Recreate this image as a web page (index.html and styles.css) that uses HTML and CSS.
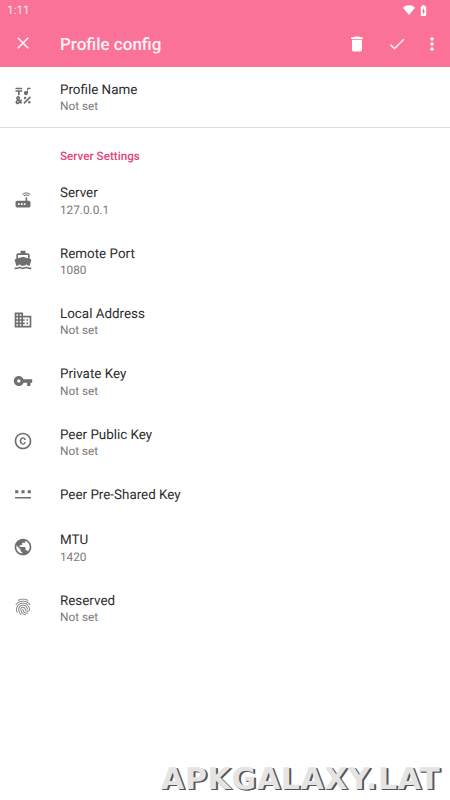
FILE: index.html
```html
<!DOCTYPE html>
<html lang="en">
<head>
<meta charset="utf-8">
<title>Profile config</title>
<link rel="stylesheet" href="styles.css">
</head>
<body>
<header class="header">
  <div class="status">
    <span class="clock">1:11</span>
    <svg class="wifi" viewBox="0 0 24 24"><path d="M12 22 0 7.500C3.500 4 7.500 2.500 12 2.500S20.500 4 24 7.500z"/></svg>
    <svg class="battery" viewBox="0 0 24 24"><path d="M15.670 4H14V2h-4v2H8.330C7.600 4 7 4.600 7 5.330v15.330C7 21.400 7.600 22 8.330 22h7.330c.740 0 1.340-.600 1.340-1.330V5.330C17 4.600 16.400 4 15.670 4zM11 20v-5.500H9L13 7v5.500h2L11 20z"/></svg>
  </div>
  <div class="toolbar">
    <svg class="icon close" viewBox="0 0 24 24"><path d="M19 6.410L17.590 5 12 10.590 6.410 5 5 6.410 10.590 12 5 17.590 6.410 19 12 13.410 17.590 19 19 17.590 13.410 12z"/></svg>
    <h1 class="heading">Profile config</h1>
    <svg class="icon delete" viewBox="0 0 24 24"><path d="M6 19c0 1.100.900 2 2 2h8c1.100 0 2-.900 2-2V7H6v12zM19 4h-3.500l-1-1h-5l-1 1H5v2h14V4z"/></svg>
    <svg class="icon done" viewBox="0 0 24 24"><path d="M9 16.200L4.800 12l-1.400 1.400L9 19 21 7l-1.400-1.400L9 16.200z"/></svg>
    <svg class="icon more" viewBox="0 0 24 24"><path d="M12 8c1.100 0 2-.900 2-2s-.900-2-2-2-2 .900-2 2 .900 2 2 2zm0 2c-1.100 0-2 .900-2 2s.900 2 2 2 2-.900 2-2-.900-2-2-2zm0 6c-1.100 0-2 .900-2 2s.900 2 2 2 2-.900 2-2-.900-2-2-2z"/></svg>
  </div>
</header>
<main>
  <section class="group">
    <div class="row">
      <svg class="icon" viewBox="0 0 24 24"><path d="M3 2h8v2H3zM6 11h2V7h3V5H3v2h3zM12.400 20.180l7.780-7.780 1.420 1.420-7.780 7.780zM15.500 11c1.380 0 2.500-1.120 2.500-2.500V4h3V2h-4v4.510c-.420-.320-.930-.510-1.500-.510-1.380 0-2.500 1.120-2.500 2.500s1.120 2.500 2.500 2.500zM9.740 15.960l-1.410 1.410-.710-.710.350-.350c.980-.980.980-2.560 0-3.540-.490-.490-1.130-.730-1.770-.730s-1.280.240-1.770.730c-.980.980-.980 2.560 0 3.540l.350.350-1.060 1.060c-.980.980-.980 2.560 0 3.540.490.490 1.130.740 1.770.740s1.280-.240 1.770-.730l1.060-1.060 1.410 1.410 1.410-1.410-1.410-1.410 1.410-1.410zM5.850 14.200c.120-.120.260-.150.350-.150s.230.030.350.150c.190.200.190.510 0 .710l-.350.350-.350-.360c-.190-.190-.190-.510 0-.700zm0 5.650c-.120.120-.260.150-.350.150s-.230-.030-.350-.150c-.190-.200-.190-.510 0-.710l1.060-1.060.710.710z"/><circle cx="14.500" cy="14.500" r="1.500"/><circle cx="19.500" cy="19.500" r="1.500"/></svg>
      <div class="text"><div class="title">Profile Name</div><div class="summary">Not set</div></div>
    </div>
  </section>
  <section>
    <h2 class="category">Server Settings</h2>
    <div class="row">
      <svg class="icon" viewBox="0 0 24 24"><path d="M20.200 5.900l.800-.800C19.600 3.700 17.800 3 16 3s-3.600.700-5 2.100l.800.800C13 4.800 14.500 4.200 16 4.200s3 .600 4.200 1.700zm-.900.800c-.900-.900-2.100-1.400-3.300-1.400s-2.400.500-3.300 1.400l.800.800c.700-.700 1.600-1 2.500-1s1.800.300 2.500 1l.800-.800zM19 13h-2V9h-2v4H5c-1.100 0-2 .900-2 2v4c0 1.100.900 2 2 2h14c1.100 0 2-.900 2-2v-4c0-1.100-.900-2-2-2zM8 18H6v-2h2v2zm3.500 0h-2v-2h2v2zm3.500 0h-2v-2h2v2z"/></svg>
      <div class="text"><div class="title">Server</div><div class="summary">127.0.0.1</div></div>
    </div>
    <div class="row">
      <svg class="icon" viewBox="0 0 24 24"><path d="M20 21c-1.390 0-2.780-.470-4-1.320-2.440 1.710-5.560 1.710-8 0C6.780 20.530 5.390 21 4 21H2v2h2c1.380 0 2.740-.350 4-.990 2.520 1.290 5.480 1.290 8 0 1.260.650 2.620.990 4 .990h2v-2h-2zM3.950 19H4c1.600 0 3.020-.880 4-2 .980 1.120 2.400 2 4 2s3.020-.880 4-2c.980 1.120 2.400 2 4 2h.050l1.890-6.680c.080-.260.060-.540-.060-.780s-.340-.420-.600-.500L20 10.620V6c0-1.100-.900-2-2-2h-3V1H9v3H6c-1.100 0-2 .900-2 2v4.620l-1.290.420c-.260.080-.480.260-.600.500s-.150.520-.060.780L3.950 19zM6 6h12v3.970L12 8 6 9.970V6z"/></svg>
      <div class="text"><div class="title">Remote Port</div><div class="summary">1080</div></div>
    </div>
    <div class="row">
      <svg class="icon" viewBox="0 0 24 24"><path d="M12 7V3H2v18h20V7H12zM6 19H4v-2h2v2zm0-4H4v-2h2v2zm0-4H4V9h2v2zm0-4H4V5h2v2zm4 12H8v-2h2v2zm0-4H8v-2h2v2zm0-4H8V9h2v2zm0-4H8V5h2v2zm10 12h-8v-2h2v-2h-2v-2h2v-2h-2V9h8v10zm-2-8h-2v2h2v-2zm0 4h-2v2h2v-2z"/></svg>
      <div class="text"><div class="title">Local Address</div><div class="summary">Not set</div></div>
    </div>
    <div class="row">
      <svg class="icon" viewBox="0 0 24 24"><path d="M12.650 10C11.830 7.670 9.610 6 7 6c-3.310 0-6 2.690-6 6s2.690 6 6 6c2.610 0 4.830-1.670 5.650-4H17v4h4v-4h2v-4H12.650zM7 14c-1.100 0-2-.900-2-2s.900-2 2-2 2 .900 2 2-.900 2-2 2z"/></svg>
      <div class="text"><div class="title">Private Key</div><div class="summary">Not set</div></div>
    </div>
    <div class="row">
      <svg class="icon" viewBox="0 0 24 24"><path d="M10.080 10.860c.050-.330.160-.620.300-.870s.340-.460.590-.620c.240-.150.540-.220.910-.230.230.010.440.050.630.130.200.090.380.210.520.360s.250.330.340.530.130.420.140.640h1.790c-.020-.470-.110-.900-.280-1.290s-.400-.730-.700-1.010-.660-.500-1.080-.660-.880-.230-1.390-.230c-.650 0-1.220.110-1.700.340s-.880.530-1.200.920-.560.840-.710 1.360S8 11.290 8 11.870v.270c0 .580.080 1.120.230 1.640s.390.970.710 1.350.720.690 1.200.910 1.050.340 1.700.340c.470 0 .910-.080 1.320-.230s.770-.360 1.080-.630.560-.580.740-.940.290-.740.300-1.150h-1.790c-.010.210-.060.400-.150.580s-.210.330-.360.460-.320.230-.520.300c-.190.070-.390.090-.600.100-.360-.010-.660-.080-.890-.230-.250-.160-.450-.370-.590-.620s-.250-.550-.300-.880-.080-.670-.080-1v-.270c0-.350.030-.680.080-1.010zM12 2C6.480 2 2 6.480 2 12s4.480 10 10 10 10-4.480 10-10S17.520 2 12 2zm0 18c-4.410 0-8-3.590-8-8s3.590-8 8-8 8 3.590 8 8-3.590 8-8 8z"/></svg>
      <div class="text"><div class="title">Peer Public Key</div><div class="summary">Not set</div></div>
    </div>
    <div class="row single">
      <svg class="icon" viewBox="0 0 24 24"><path d="M2.500 15.500h19v2h-19zM2.600 7.500h3.800v3.600H2.600zM10.100 7.500h3.800v3.600h-3.800zM17.600 7.500h3.800v3.600h-3.800z"/></svg>
      <div class="text"><div class="title">Peer Pre-Shared Key</div></div>
    </div>
    <div class="row">
      <svg class="icon" viewBox="0 0 24 24"><path d="M12 2C6.480 2 2 6.480 2 12s4.480 10 10 10 10-4.480 10-10S17.520 2 12 2zm-1 17.930c-3.950-.490-7-3.850-7-7.930 0-.620.080-1.210.210-1.790L9 15v1c0 1.100.900 2 2 2v1.930zm6.900-2.540c-.260-.810-1-1.390-1.900-1.390h-1v-3c0-.550-.450-1-1-1H8v-2h2c.550 0 1-.450 1-1V7h2c1.100 0 2-.900 2-2v-.410c2.930 1.190 5 4.060 5 7.410 0 2.080-.800 3.970-2.100 5.390z"/></svg>
      <div class="text"><div class="title">MTU</div><div class="summary">1420</div></div>
    </div>
    <div class="row">
      <svg class="icon" viewBox="0 0 24 24"><path d="M17.810 4.470c-.080 0-.160-.020-.230-.060C15.660 3.420 14 3 12.010 3c-1.980 0-3.860.470-5.570 1.410-.240.130-.540.040-.680-.200-.130-.240-.040-.550.200-.680C7.820 2.520 9.860 2 12.010 2c2.130 0 3.990.470 6.030 1.520.250.130.340.430.210.670-.090.180-.260.280-.440.280zM3.500 9.720c-.100 0-.200-.030-.290-.090-.230-.160-.280-.470-.120-.700.990-1.400 2.250-2.500 3.750-3.270C9.980 4.040 14 4.030 17.150 5.650c1.500.770 2.760 1.860 3.750 3.250.160.220.110.540-.120.700-.230.160-.540.110-.700-.120-.900-1.260-2.040-2.250-3.390-2.940-2.870-1.470-6.540-1.470-9.400.010-1.360.700-2.500 1.700-3.400 2.960-.080.140-.230.210-.390.210zm6.250 12.070c-.130 0-.260-.050-.350-.150-.870-.870-1.340-1.430-2.010-2.640-.690-1.230-1.050-2.730-1.050-4.340 0-2.970 2.540-5.390 5.660-5.390s5.660 2.420 5.660 5.390c0 .280-.220.500-.500.500s-.500-.220-.500-.500c0-2.420-2.090-4.390-4.660-4.390-2.570 0-4.660 1.970-4.660 4.390 0 1.440.320 2.770.930 3.850.640 1.150 1.080 1.640 1.850 2.420.190.200.190.510 0 .710-.110.100-.240.150-.370.150zm7.170-1.850c-1.190 0-2.240-.300-3.100-.890-1.490-1.010-2.380-2.650-2.380-4.390 0-.280.220-.500.500-.500s.500.220.500.500c0 1.410.720 2.740 1.940 3.560.710.480 1.540.710 2.540.710.240 0 .640-.030 1.040-.100.270-.050.530.130.580.410.050.270-.130.530-.410.580-.570.110-1.070.120-1.210.120zM14.910 22c-.040 0-.090-.010-.130-.020-1.590-.440-2.630-1.030-3.720-2.100-1.400-1.390-2.170-3.240-2.170-5.220 0-1.620 1.380-2.940 3.080-2.940 1.700 0 3.080 1.320 3.080 2.940 0 1.070.930 1.940 2.080 1.940s2.080-.870 2.080-1.940c0-3.770-3.250-6.830-7.250-6.830-2.840 0-5.440 1.580-6.610 4.030-.390.810-.590 1.760-.590 2.800 0 .780.070 2.010.670 3.610.100.260-.030.550-.290.640-.260.100-.550-.040-.640-.290-.490-1.310-.730-2.610-.730-3.960 0-1.200.230-2.290.680-3.240 1.330-2.790 4.280-4.600 7.510-4.600 4.550 0 8.250 3.510 8.250 7.830 0 1.620-1.380 2.940-3.080 2.940s-3.080-1.320-3.080-2.940c0-1.070-.930-1.940-2.080-1.940s-2.080.870-2.080 1.940c0 1.710.660 3.310 1.870 4.510.950.940 1.860 1.460 3.270 1.850.270.070.420.350.350.610-.050.230-.260.380-.470.380z"/></svg>
      <div class="text"><div class="title">Reserved</div><div class="summary">Not set</div></div>
    </div>
  </section>
</main>
<div class="watermark">APKGALAXY.LAT</div>
</body>
</html>
```

FILE: styles.css
```css
* { box-sizing: border-box; }

body {
  margin: 0;
  height: 800px;
  overflow: hidden;
  position: relative;
  background: #fff;
  color: #2c2c2c;
  font-family: Roboto, "Liberation Sans", sans-serif;
  text-rendering: geometricPrecision;
}

.header {
  height: 66.6px;
  background: #fb7299;
  color: #fff;
}

.status {
  display: flex;
  align-items: center;
  height: 20px;
  padding: 0 20px 0 7px;
}

.clock {
  margin-right: auto;
  font-size: 11.8px;
  color: #ffe3eb;
}

svg { fill: currentColor; flex: none; }

.wifi { width: 12px; height: 12px; }
.battery { width: 13px; height: 13px; margin-left: 2px; }

.toolbar {
  display: flex;
  align-items: center;
  height: 47px;
  padding: 0 8.5px 0 13.4px;
}

.icon { width: 20px; height: 20px; }
.close, .done { color: #ffe9ef; }
.close { margin-top: -1px; }

.heading {
  flex: 1;
  margin: 3px 0 0 26.6px;
  font-size: 17px;
  line-height: 20px;
  font-weight: 500;
  color: #fff0f4;
}

.done { margin-left: 20px; }
.more { margin-left: 15px; }

.group {
  border-bottom: 1px solid #e0e0e0;
}

.row {
  display: flex;
  align-items: center;
  height: 60.4px;
  padding-left: 13.4px;
}

.row .icon {
  margin-bottom: 1px;
  color: #6f6f6f;
}
.row.single { height: 45px; }

.text {
  margin-left: 26.6px;
  padding-top: 3.4px;
}

.title {
  font-size: 13.4px;
  line-height: 16.4px;
}

.summary {
  font-size: 11.8px;
  line-height: 15px;
  color: #7a7a7a;
}

.category {
  margin: 0;
  padding: 20px 0 0 60px;
  height: 42px;
  font-size: 11.7px;
  line-height: 16px;
  font-weight: 500;
  color: #e2457c;
}

.watermark {
  position: absolute;
  left: 161px;
  top: 764px;
  font: bold 30px/32px "DejaVu Sans", sans-serif;
  letter-spacing: 0.7px;
  white-space: nowrap;
  color: #e4e4e4;
  text-shadow: 1px 1px 0 #555, 2px 1px 0 #555;
}
```
